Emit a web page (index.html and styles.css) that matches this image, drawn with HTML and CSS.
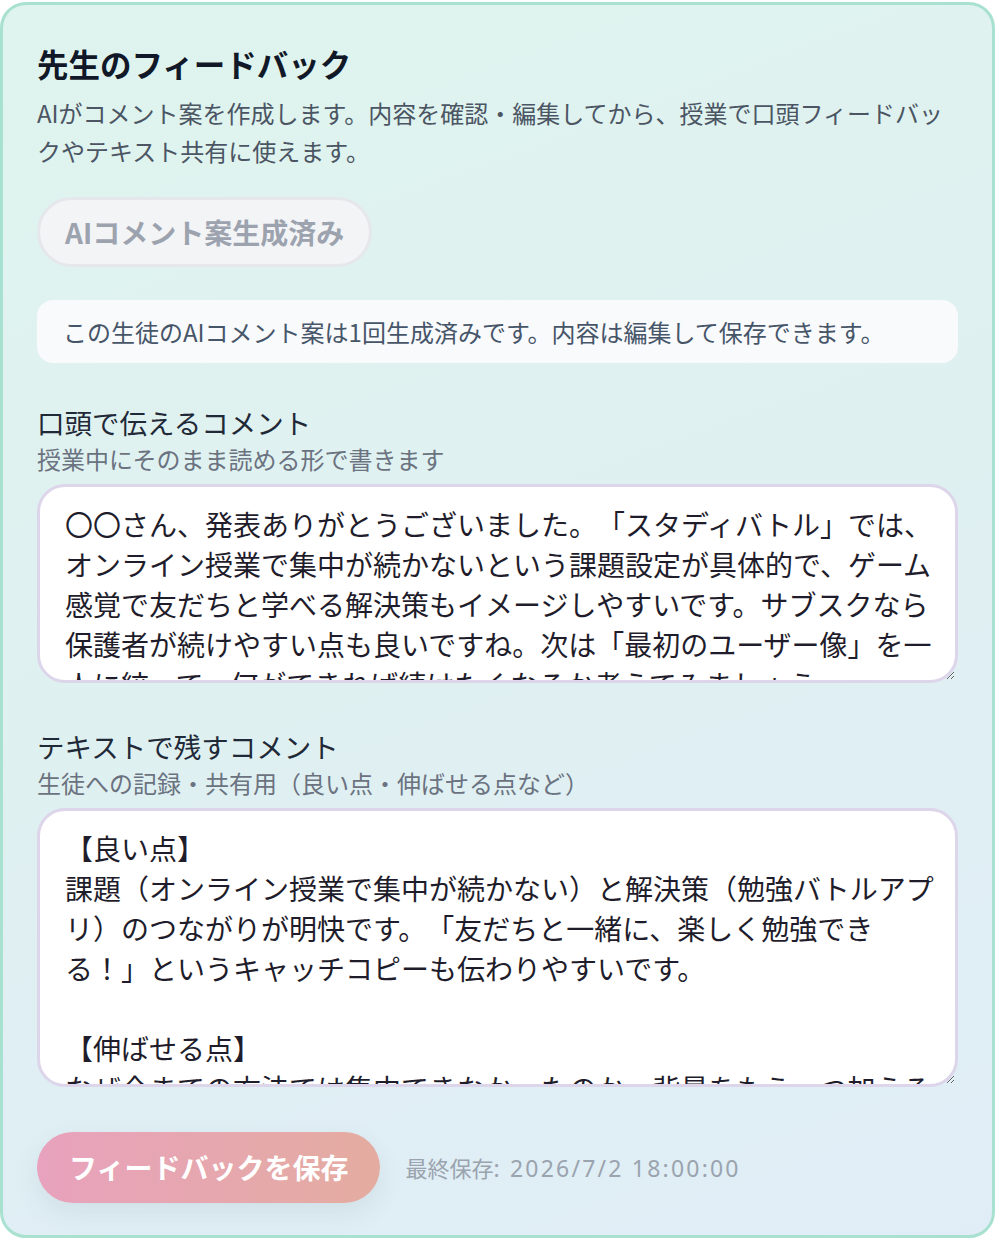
FILE: index.html
```html
<!DOCTYPE html>
<html lang="ja">
<head>
<meta charset="utf-8">
<title>先生のフィードバック</title>
<link rel="stylesheet" href="styles.css">
</head>
<body>
<section class="card">
  <h2 class="title">先生のフィードバック</h2>
  <p class="desc">AIがコメント案を作成します。内容を確認・編集してから、授業で口頭フィードバックやテキスト共有に使えます。</p>
  <button class="gen-btn" type="button" disabled>AIコメント案生成済み</button>
  <div class="notice">この生徒のAIコメント案は1回生成済みです。内容は編集して保存できます。</div>

  <div class="field">
    <div class="field-label">口頭で伝えるコメント</div>
    <div class="field-hint">授業中にそのまま読める形で書きます</div>
    <textarea class="field-input" rows="4">〇〇さん、発表ありがとうございました。「スタディバトル」では、オンライン授業で集中が続かないという課題設定が具体的で、ゲーム感覚で友だちと学べる解決策もイメージしやすいです。サブスクなら保護者が続けやすい点も良いですね。次は「最初のユーザー像」を一人に絞って、何ができれば続けたくなるか考えてみましょう。</textarea>
  </div>

  <div class="field">
    <div class="field-label">テキストで残すコメント</div>
    <div class="field-hint">生徒への記録・共有用（良い点・伸ばせる点など）</div>
    <textarea class="field-input" rows="6">【良い点】
課題（オンライン授業で集中が続かない）と解決策（勉強バトルアプリ）のつながりが明快です。「友だちと一緒に、楽しく勉強できる！」というキャッチコピーも伝わりやすいです。

【伸ばせる点】
なぜ今までの方法では集中できなかったのか、背景をもう一つ加えると、提案の説得力がさらに増します。</textarea>
  </div>

  <div class="actions">
    <button class="save-btn" type="button">フィードバックを保存</button>
    <span class="saved-at">最終保存<span class="saved-time">: 2026/7/2 18:00:00</span></span>
  </div>
</section>
</body>
</html>
```

FILE: styles.css
```css
* {
  box-sizing: border-box;
  text-spacing-trim: space-all;
}

html, body {
  margin: 0;
  padding: 0;
  background: #ffffff;
}

body {
  font-family: "Noto Sans CJK JP", "Noto Sans", sans-serif;
  color: #1f2937;
}

.card {
  width: 995px;
  margin: 2px 0 0 0;
  border: 3px solid #a9e1d0;
  border-radius: 26px;
  background: linear-gradient(160deg, #dff4ee 0%, #dff0f1 50%, #e0edf7 100%);
  padding: 38px 34px 32px 34px;
  display: flex;
  flex-direction: column;
  align-items: stretch;
}

.title {
  margin: 0;
  font-size: 31.5px;
  line-height: 40px;
  font-weight: 700;
  color: #111827;
}

.desc {
  margin: 11px 0 0 0;
  font-size: 24px;
  line-height: 38px;
  color: #4b5563;
}

.gen-btn {
  align-self: flex-start;
  margin-top: 27px;
  font-family: inherit;
  font-size: 28px;
  line-height: 40px;
  font-weight: 700;
  color: #9ca3af;
  background: #f3f4f6;
  border: 3px solid #e5e7eb;
  border-radius: 999px;
  padding: 12px 25px;
  cursor: default;
}

.notice {
  margin-top: 33px;
  background: #f8fafc;
  border-radius: 16px;
  padding: 12px 26px;
  font-size: 24px;
  line-height: 39px;
  color: #475569;
}

.field {
  display: flex;
  flex-direction: column;
  margin-top: 41px;
}

.field + .field {
  margin-top: 45px;
}

.field-label {
  font-size: 27.5px;
  line-height: 37px;
  color: #1f2937;
}

.field-hint {
  font-size: 24px;
  line-height: 36px;
  color: #6b7280;
}

.field-input {
  margin-top: 7px;
  width: 100%;
  display: block;
  font-family: inherit;
  font-size: 28px;
  line-height: 40px;
  color: #1f1d2b;
  background: #ffffff;
  border: 3px solid #ddd5ea;
  border-radius: 28px;
  padding: 17px 11px 16px 25px;
  overflow: hidden;
  resize: vertical;
  outline: none;
}

.actions {
  margin-top: 45px;
  display: flex;
  align-items: center;
  gap: 25px;
}

.save-btn {
  font-family: inherit;
  font-size: 28px;
  line-height: 40px;
  font-weight: 700;
  color: #ffffff;
  border: none;
  border-radius: 999px;
  padding: 15px 32px 16px 32px;
  background: linear-gradient(90deg, #e8a2bd 0%, #e4aca0 100%);
  box-shadow: 0 10px 24px rgba(80, 110, 120, 0.10);
  cursor: pointer;
}

.saved-at {
  font-size: 22px;
  line-height: 36px;
  color: #9aa3ae;
}

.saved-time {
  font-family: "Noto Sans", "Noto Sans CJK JP", sans-serif;
  font-size: 23px;
  letter-spacing: 2.2px;
}
```
